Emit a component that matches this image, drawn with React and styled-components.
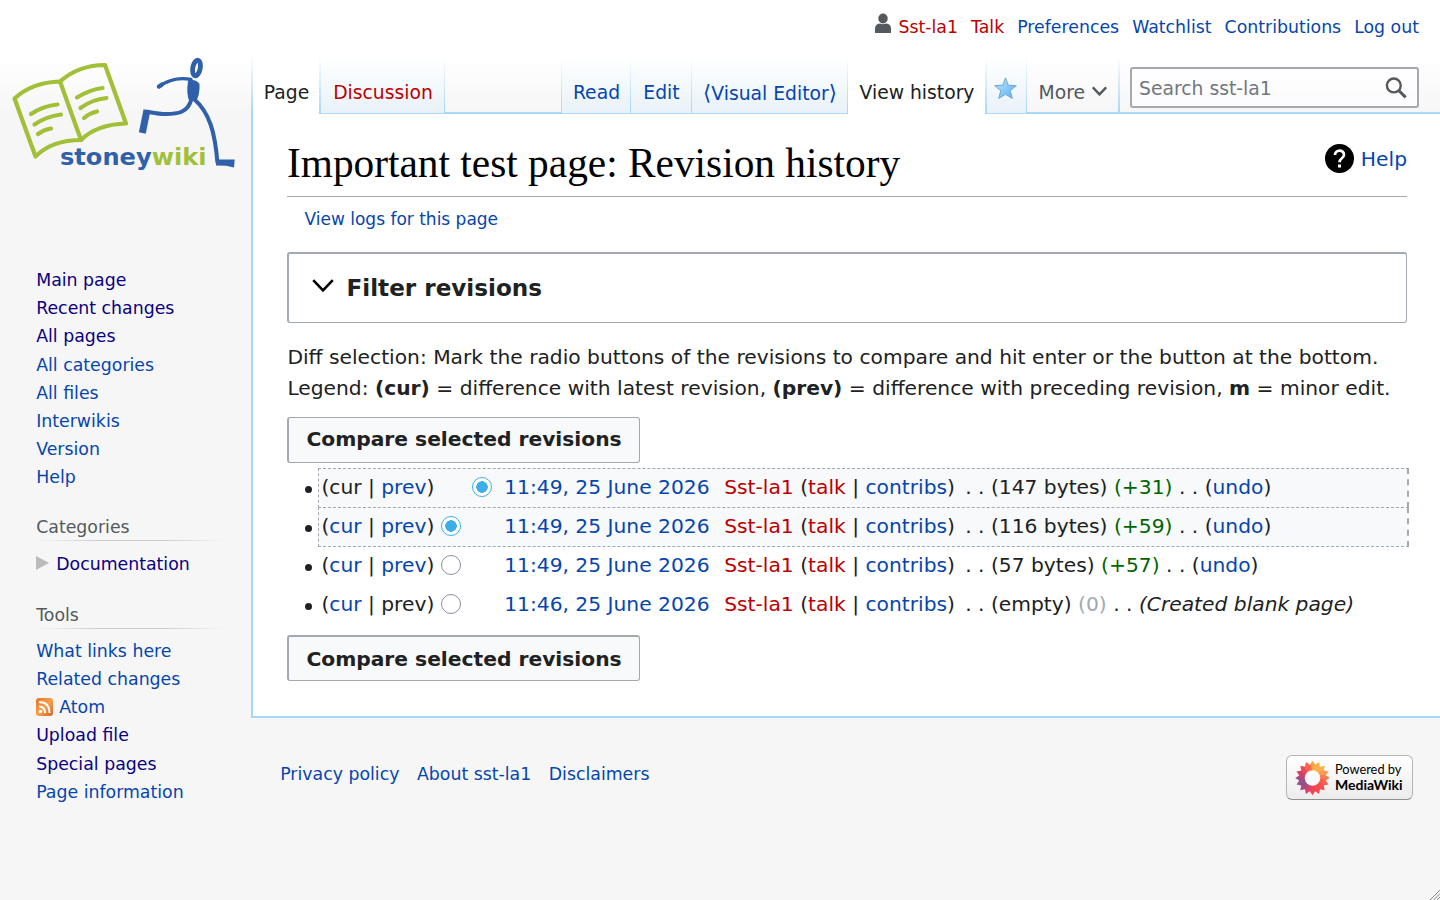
import React, { useState } from "react";
import styled, { createGlobalStyle, css } from "styled-components";

const GlobalStyle = createGlobalStyle`
  * {
    box-sizing: border-box;
  }

  body {
    margin: 0;
    height: 900px;
    overflow: hidden;
    background: #f6f6f6;
    color: #202122;
    font-family: "DejaVu Sans", sans-serif;
  }
`;

const linkColors = {
  normal: "#0645ad",
  visited: "#0b0080",
  missing: "#ba0000",
};

const Link = styled.a`
  color: ${({ $kind }) => linkColors[$kind || "normal"]};
  text-decoration: none;
  cursor: pointer;

  &:hover {
    text-decoration: underline;
  }
`;

const Page = styled.div`
  position: relative;
  width: 1440px;
  height: 900px;
  display: grid;
  grid-template-columns: 251px minmax(0, 1fr);
  background: linear-gradient(#ffffff 57px, #f6f6f6 114px);
`;

/* ---------- sidebar ---------- */

const Sidebar = styled.aside`
  font-size: 17.33px;
`;

const LogoLink = styled.a`
  display: block;
  height: 266px;

  svg {
    display: block;
  }
`;

const Portal = styled.nav`
  padding: 0 25px 0 36.2px;
  margin-bottom: ${({ $gap }) => $gap || 0}px;
`;

const PortalTitle = styled.h3`
  margin: 0 0 ${({ $gap }) => $gap || 8}px;
  height: 28px;
  padding-bottom: 1px;
  font-size: 17.33px;
  font-weight: normal;
  line-height: 28px;
  color: #54595d;
  background: linear-gradient(
      to right,
      rgba(200, 204, 209, 0) 0,
      #c8ccd1 33%,
      #c8ccd1 66%,
      rgba(200, 204, 209, 0) 100%
    )
    0 100% / 100% 1px no-repeat;
`;

const PortalList = styled.ul`
  list-style: none;
  margin: 0;
  padding: 0;
`;

const PortalItem = styled.li`
  display: flex;
  align-items: center;
  gap: 6px;
  height: 28.2px;
  line-height: 28px;
  white-space: nowrap;
`;

const Arrow = styled.span`
  width: 0;
  height: 0;
  margin: -2px 1px 0 0;
  border-left: 13px solid #bbbbbb;
  border-top: 7px solid transparent;
  border-bottom: 7px solid transparent;
`;

/* ---------- header ---------- */

const Main = styled.div`
  display: flex;
  flex-direction: column;
  min-width: 0;
`;

const PersonalBar = styled.nav`
  display: flex;
  justify-content: flex-end;
  gap: 13px;
  height: 57px;
  padding: 14px 21px 0 0;
  font-size: 17.33px;
  line-height: 26px;
  white-space: nowrap;
`;

const UserEntry = styled.span`
  display: flex;
  gap: 6px;

  svg {
    margin-top: -1.5px;
  }
`;

const TabBar = styled.div`
  display: flex;
  height: 57px;
  background: linear-gradient(#a7d7f9, #a7d7f9) 0 100% / 100% 2px no-repeat;
`;

const fadeLine = "linear-gradient(to bottom, rgba(167, 215, 249, 0), #a7d7f9)";

const Tab = styled.div`
  display: flex;
  flex: none;
  justify-content: center;
  width: ${({ $width }) => $width}px;
  height: 57px;
  padding-top: 21px;
  font-size: 18.75px;
  line-height: 30px;
  white-space: nowrap;
  background:
    ${fadeLine} 100% 0 / ${({ $edge }) => $edge ?? 1}px 100% no-repeat,
    linear-gradient(to top, #77c1f6 0, #e8f2f8 1px, #ffffff 100%);

  ${({ $selected }) =>
    $selected &&
    css`
      padding-right: 1px;
      background:
        ${fadeLine} 100% 0 / ${({ $edge }) => $edge ?? 1}px 100% no-repeat,
        #ffffff;
      color: #202122;
    `}
`;

const WatchTab = styled(Tab)`
  padding: 20px 3px 0 0;
`;

const Bracket = styled.span`
  font-size: 1.12em;
`;

const TabEdge = styled.span`
  width: ${({ $width }) => $width || 1}px;
  height: 57px;
  background: ${fadeLine};
`;

const Spacer = styled.div`
  flex: 1;
`;

const MoreButton = styled.button`
  display: flex;
  align-items: center;
  gap: 7px;
  width: 91px;
  height: 55px;
  padding: 15px 0 0 11.5px;
  border: 0;
  background: none;
  color: #54595d;
  font: 18.75px "DejaVu Sans", sans-serif;

  svg {
    margin-top: -3px;
  }
`;

const SearchBox = styled.form`
  display: flex;
  align-items: center;
  width: 289px;
  height: 41px;
  margin: 10px 21px 0 10px;
  padding: 0 10px 0 7px;
  border: 2px solid #a2a9b1;
  border-radius: 3px;
  background: rgba(255, 255, 255, 0.5);
`;

const SearchInput = styled.input`
  flex: 1;
  min-width: 0;
  padding: 2px 0 0;
  border: 0;
  outline: 0;
  background: none;
  font: 18.75px "DejaVu Sans", sans-serif;

  &::placeholder {
    color: #72777d;
    opacity: 1;
  }
`;

/* ---------- content ---------- */

const Content = styled.main`
  height: 604px;
  padding: 24px 33px 0 34px;
  border-left: 2px solid #a7d7f9;
  border-bottom: 2px solid #a7d7f9;
  background: #ffffff;
  font-size: 20.24px;
  white-space: nowrap;
`;

const TitleRow = styled.header`
  display: flex;
  justify-content: space-between;
  height: 59px;
  border-bottom: 1px solid #a2a9b1;
`;

const Title = styled.h1`
  margin: 0;
  color: #000000;
  font: 41.35px/50px "Liberation Serif", serif;
`;

const HelpLink = styled(Link)`
  display: flex;
  align-items: center;
  gap: 7px;
  height: 41px;
  font-size: 20.24px;
`;

const SubTitle = styled.div`
  height: 55px;
  padding: 9px 0 0 17.5px;
  font-size: 17px;
  line-height: 26px;
`;

const FilterBox = styled.section`
  display: flex;
  align-items: center;
  gap: 12.5px;
  height: 71px;
  padding-left: 23px;
  border: 1px solid #a2a9b1;
  border-width: 2px 1px 1px 2px;
  border-radius: 3px;
  font-size: 23.1px;
  font-weight: bold;

  svg {
    margin-top: -5px;
  }
`;

const Explanation = styled.p`
  margin: 19px 0 13px;
  padding-left: 0.4px;
  line-height: 31px;
`;

const CompareButton = styled.button`
  display: block;
  width: 353px;
  height: 46px;
  padding: 0 0 ${({ $topEdge }) => ($topEdge ? 0 : 2)}px;
  border: 1px solid #a2a9b1;
  border-width: ${({ $topEdge }) => $topEdge || 1}px 1px 1px 2px;
  border-radius: 3px;
  background: #f8f9fa;
  color: #202122;
  font: bold 20.24px "DejaVu Sans", sans-serif;
`;

const RevisionList = styled.ul`
  list-style: none;
  margin: 5px -2px 11px 15px;
  padding: 0;
`;

const Revision = styled.li`
  display: flex;
  align-items: center;
  height: 39px;

  &::before {
    content: "";
    width: 7px;
    height: 7px;
    margin: 4px 6px 0 3px;
    border-radius: 50%;
    background: #202122;
  }
`;

const RevisionBody = styled.div`
  display: flex;
  align-items: center;
  flex: 1;
  height: 40px;
  padding: 0 0 1px 2.4px;
  border: 1px dashed transparent;
  border-right-width: 2px;

  ${({ $selected }) =>
    $selected &&
    css`
      border-color: #a2a9b1;
      background: #f8f9fa;
    `}
`;

const HistoryLinks = styled.span`
  width: 119.3px;
`;

const RadioSlot = styled.span`
  display: flex;
  width: ${({ $width }) => $width}px;
  height: 21px;
`;

const Radio = styled.input`
  appearance: none;
  width: 20px;
  height: 20px;
  margin: 0;
  border: 1.5px solid #8e8c9e;
  border-radius: 50%;
  background: #ffffff;

  &:checked {
    border-color: #3daee9;
    background: radial-gradient(circle, #3daee9 5.5px, #ffffff 6px);
  }
`;

const Timestamp = styled(Link)`
  width: 220px;
`;

const Editor = styled.span`
  width: 241px;
`;

const SizeChange = styled.span`
  color: ${({ $zero }) => ($zero ? "#a2a9b1" : "#006400")};
`;

/* ---------- footer ---------- */

const Footer = styled.footer`
  display: flex;
  justify-content: space-between;
  padding: 37px 27px 0 29.2px;
  font-size: 17.33px;
`;

const FooterLinks = styled.nav`
  display: flex;
  gap: 17.5px;
  line-height: 38px;
`;

const PoweredBy = styled.a`
  display: flex;
  align-items: center;
  gap: 5px;
  width: 127px;
  height: 45px;
  padding-left: 8px;
  border: 1px solid #b5b5b5;
  border-bottom-color: #8f8f8f;
  border-radius: 6px;
  background: linear-gradient(#ffffff, #ececec);
  color: #000000;
  font: 12.8px/15px Lato, sans-serif;
  white-space: nowrap;

  span {
    padding-bottom: 2px;
  }

  strong {
    display: block;
    font-size: 14px;
    font-weight: bold;
  }
`;

const ResizeGrip = styled.svg`
  position: absolute;
  right: 0;
  bottom: 0;
`;

const Logo = () => (
  <svg width="250" height="190" viewBox="0 0 250 190" fill="none">
    <g stroke="#a2c037" strokeWidth="4.2" strokeLinecap="round" strokeLinejoin="round">
      <path d="M14.5 98.5C27 87 43 82 60 81.5L81 140C63 140 47 145 35.500 156.500Z" />
      <path d="M60 81.500C72 71 88 65 105 65L126 123.500C109 124 92 129 81 140" />
      <path d="M31 114Q43 106 57.500 104.500M34.500 124.500Q46 116.500 61 114.500M38 134Q44 129.500 51 128.500" />
      <path d="M77 97.500Q90 89.500 102.500 88M80.500 108Q92 99.500 106.500 98M84 118Q90 113 97 111.500" />
    </g>
    <g stroke="#3060aa">
      <ellipse cx="196.500" cy="68" rx="3.700" ry="7.900" strokeWidth="4.800" transform="rotate(11 196.500 68)" />
      <path d="M191 79.500C180 77 168 80 159 86.500" strokeWidth="3.400" strokeLinecap="round" />
      <path d="M159 86.500L162 84.500" strokeWidth="4.500" strokeLinecap="round" />
      <path d="M191.500 99C188 113 177 114 166 114C158 114 152 112.500 146 111.500" strokeWidth="4" />
      <path d="M147 110L142.300 133" strokeWidth="7" />
      <path d="M194 99C210 113 215 133 217.500 163" strokeWidth="4" />
      <path d="M188 81Q195 78 199.500 84Q200 95 196 101H189.500Q186 95 188 81Z" fill="#3060aa" stroke="none" />
      <path d="M216 159.500L234.700 159.500L234 167.500L226 165.800L216 165.500Z" fill="#3060aa" stroke="none" />
    </g>
    <text x="60" y="165" textLength="146.500" lengthAdjust="spacingAndGlyphs" fontFamily="DejaVu Sans, sans-serif" fontWeight="bold" fontSize="23.500" fill="#3060aa">
      stoney
      <tspan fill="#a2c037">wiki</tspan>
    </text>
  </svg>
);

const UserIcon = () => (
  <svg width="18" height="20" viewBox="0 0 18 20" fill="#54595d">
    <ellipse cx="9" cy="5.500" rx="4.700" ry="5" />
    <path d="M1 20V16Q1 10.800 6 10.500Q9 12 12 10.500Q17 10.800 17 16V20Z" />
  </svg>
);

const StarIcon = () => (
  <svg width="23" height="23" viewBox="0 0 23 23">
    <defs>
      <linearGradient id="star" x1="0" y1="0" x2="1" y2="1">
        <stop offset="0" stopColor="#c5e6fc" />
        <stop offset="1" stopColor="#4fb0fa" />
      </linearGradient>
    </defs>
    <path d="M11.500 .8L14.300 8.200L22.300 8.700L16.200 13.700L18.300 21.500L11.500 17.200L4.700 21.500L6.800 13.700L.7 8.700L8.700 8.200Z" fill="url(#star)" stroke="#72a8cf" strokeLinejoin="round" />
  </svg>
);

const Chevron = ({ width, height, color, stroke }) => (
  <svg width={width} height={height} viewBox="0 0 20 12" fill="none">
    <path d="M1 1L10 10.500L19 1" stroke={color} strokeWidth={stroke} />
  </svg>
);

const SearchIcon = () => (
  <svg width="22" height="22" viewBox="0 0 20 20" fill="none" stroke="#54595d">
    <circle cx="8" cy="7.700" r="6.300" strokeWidth="2.200" />
    <path d="M12.300 12L18.800 18.500" strokeWidth="2.700" />
  </svg>
);

const HelpIcon = () => (
  <svg width="29" height="29" viewBox="0 0 29 29" fill="none">
    <circle cx="14.500" cy="14.500" r="14.500" fill="#000000" />
    <path d="M10 11C10 5.200 19 5.200 19 10.700C19 14.500 14.500 14 14.500 18.300" stroke="#ffffff" strokeWidth="2.700" />
    <path d="M13 20.500H16V23.500H13Z" fill="#ffffff" />
  </svg>
);

const FeedIcon = () => (
  <svg width="17" height="18" viewBox="0 0 17 18" fill="none">
    <defs>
      <linearGradient id="feed" x1="0" y1="0" x2="1" y2="1">
        <stop offset="0" stopColor="#e8702a" />
        <stop offset=".5" stopColor="#f8a04b" />
        <stop offset="1" stopColor="#d9602a" />
      </linearGradient>
    </defs>
    <rect width="17" height="18" rx="3" fill="url(#feed)" />
    <circle cx="4.500" cy="13.500" r="1.700" fill="#ffffff" />
    <path d="M3 8.500Q9 8.500 9 15M3 4Q13.500 4 13.500 15" stroke="#ffffff" strokeWidth="2" />
  </svg>
);

// petal colours, clockwise from the top
const petals = [
  "#fba044", "#fdae48", "#fdb04c", "#fb9a50",
  "#f97a50", "#f7604f", "#f5504e", "#f34a50",
  "#ef4452", "#d9426a", "#b04a7c", "#94508a",
  "#a84a80", "#d04068", "#ee4658", "#f6644e",
];

const Sunflower = () => (
  <svg width="35" height="36" viewBox="-18 -18.500 36 37">
    {petals.map((color, i) => (
      <path key={color} d="M0 -17.800L3.400 -12.500L2.500 -7H-2.500L-3.400 -12.500Z" fill={color} transform={`rotate(${i * 22.5})`} />
    ))}
    <circle r="8" fill="#fafafa" />
  </svg>
);

const mainLinks = [
  { label: "Main page", kind: "visited" },
  { label: "Recent changes", kind: "visited" },
  { label: "All pages", kind: "visited" },
  { label: "All categories" },
  { label: "All files" },
  { label: "Interwikis" },
  { label: "Version" },
  { label: "Help" },
];

const toolLinks = [
  { label: "What links here" },
  { label: "Related changes" },
  { label: "Atom", icon: <FeedIcon /> },
  { label: "Upload file", kind: "visited" },
  { label: "Special pages", kind: "visited" },
  { label: "Page information" },
];

const revisions = [
  { id: 4, time: "11:49, 25 June 2026", size: "147 bytes", change: "+31" },
  { id: 3, time: "11:49, 25 June 2026", size: "116 bytes", change: "+59" },
  { id: 2, time: "11:49, 25 June 2026", size: "57 bytes", change: "+57" },
  { id: 1, time: "11:46, 25 June 2026", size: "empty", change: "0", comment: "Created blank page" },
];

const LinkList = ({ items }) => (
  <PortalList>
    {items.map((item) => (
      <PortalItem key={item.label}>
        {item.icon}
        <Link $kind={item.kind}>{item.label}</Link>
      </PortalItem>
    ))}
  </PortalList>
);

const App = () => {
  const [newer, setNewer] = useState(4);
  const [older, setOlder] = useState(3);

  return (
    <Page>
      <GlobalStyle />
      <Sidebar>
        <LogoLink>
          <Logo />
        </LogoLink>
        <Portal $gap={21}>
          <LinkList items={mainLinks} />
        </Portal>
        <Portal $gap={23}>
          <PortalTitle $gap={9}>Categories</PortalTitle>
          <PortalList>
            <PortalItem>
              <Arrow />
              <Link $kind="visited">Documentation</Link>
            </PortalItem>
          </PortalList>
        </Portal>
        <Portal>
          <PortalTitle>Tools</PortalTitle>
          <LinkList items={toolLinks} />
        </Portal>
      </Sidebar>

      <Main>
        <PersonalBar>
          <UserEntry>
            <UserIcon />
            <Link $kind="missing">Sst-la1</Link>
          </UserEntry>
          <Link $kind="missing">Talk</Link>
          <Link>Preferences</Link>
          <Link>Watchlist</Link>
          <Link>Contributions</Link>
          <Link>Log out</Link>
        </PersonalBar>

        <TabBar>
          <TabEdge $width={2} />
          <Tab $width={68} $edge={2} $selected>Page</Tab>
          <Tab $width={124}>
            <Link $kind="missing">Discussion</Link>
          </Tab>
          <Spacer />
          <TabEdge />
          <Tab $width={69}><Link>Read</Link></Tab>
          <Tab $width={61}><Link>Edit</Link></Tab>
          <Tab $width={156}>
            <Link>
              <Bracket>⟨</Bracket>Visual Editor<Bracket>⟩</Bracket>
            </Link>
          </Tab>
          <Tab $width={139} $edge={2} $selected>View history</Tab>
          <WatchTab $width={40}><StarIcon /></WatchTab>
          <MoreButton>
            More
            <Chevron width={15} height={10} color="#54595d" stroke={3.3} />
          </MoreButton>
          <TabEdge $width={2} />
          <SearchBox>
            <SearchInput placeholder="Search sst-la1" />
            <SearchIcon />
          </SearchBox>
        </TabBar>

        <Content>
          <TitleRow>
            <Title>Important test page: Revision history</Title>
            <HelpLink>
              <HelpIcon />
              Help
            </HelpLink>
          </TitleRow>
          <SubTitle>
            <Link>View logs for this page</Link>
          </SubTitle>
          <FilterBox>
            <Chevron width={22} height={13} color="#000000" stroke={2.4} />
            Filter revisions
          </FilterBox>
          <Explanation>
            Diff selection: Mark the radio buttons of the revisions to compare and hit enter or the button at the bottom.
            <br />
            Legend: <b>(cur)</b> = difference with latest revision, <b>(prev)</b> = difference with preceding revision, <b>m</b> = minor edit.
          </Explanation>
          <CompareButton>Compare selected revisions</CompareButton>
          <RevisionList>
            {revisions.map((rev, index) => {
              const isFirst = index === 0;
              const isLast = index === revisions.length - 1;

              return (
                <Revision key={rev.id}>
                  <RevisionBody $selected={rev.id === newer || rev.id === older}>
                    <HistoryLinks>
                      ({isFirst ? "cur" : <Link>cur</Link>} | {isLast ? "prev" : <Link>prev</Link>})
                    </HistoryLinks>
                    <RadioSlot $width={31.5}>
                      {!isFirst && <Radio type="radio" name="oldid" checked={older === rev.id} onChange={() => setOlder(rev.id)} />}
                    </RadioSlot>
                    <RadioSlot $width={32}>
                      {rev.id > older && <Radio type="radio" name="diff" checked={newer === rev.id} onChange={() => setNewer(rev.id)} />}
                    </RadioSlot>
                    <Timestamp>{rev.time}</Timestamp>
                    <Editor>
                      <Link $kind="missing">Sst-la1</Link> (<Link $kind="missing">talk</Link> | <Link>contribs</Link>)
                    </Editor>
                    <span>
                      . . ({rev.size}) <SizeChange $zero={rev.change === "0"}>({rev.change})</SizeChange> . .{" "}
                      {rev.comment ? <i>({rev.comment})</i> : <>(<Link>undo</Link>)</>}
                    </span>
                  </RevisionBody>
                </Revision>
              );
            })}
          </RevisionList>
          <CompareButton $topEdge={2}>Compare selected revisions</CompareButton>
        </Content>

        <Footer>
          <FooterLinks>
            <Link>Privacy policy</Link>
            <Link>About sst-la1</Link>
            <Link>Disclaimers</Link>
          </FooterLinks>
          <PoweredBy>
            <Sunflower />
            <span>
              Powered by
              <strong>MediaWiki</strong>
            </span>
          </PoweredBy>
        </Footer>
      </Main>

      <ResizeGrip width="10" height="10" viewBox="0 0 10 10" stroke="#8a8a8a">
        <path d="M0 10L10 0M3.500 10L10 3.500M7 10L10 7" />
      </ResizeGrip>
    </Page>
  );
};

export default App;
